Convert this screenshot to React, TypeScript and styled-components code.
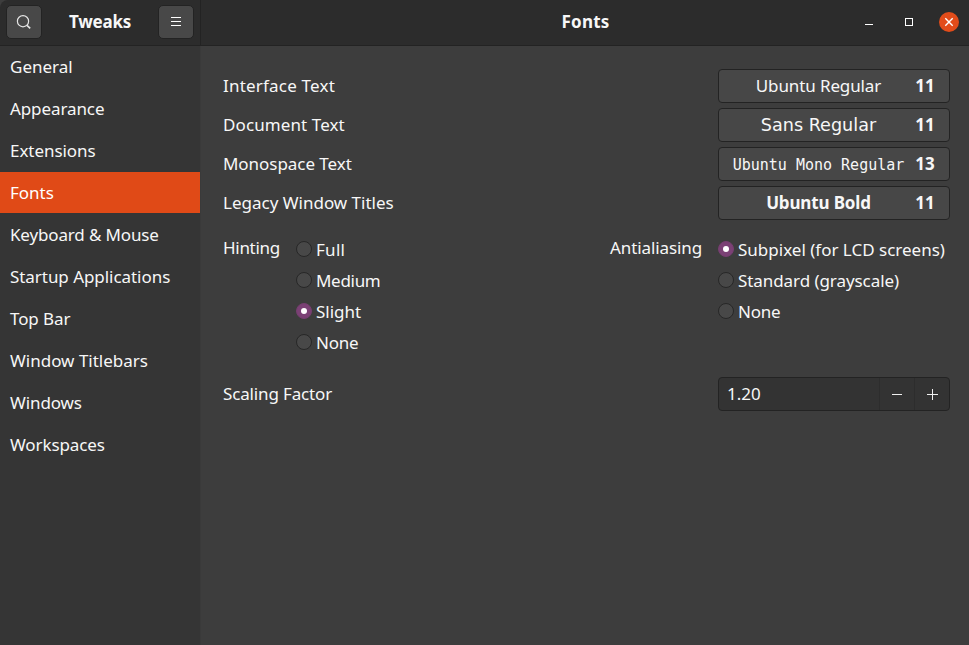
import React from "react";
import styled, { createGlobalStyle, css } from "styled-components";

const GlobalStyle = createGlobalStyle`
  *, *::before, *::after { box-sizing: border-box; }
  body { margin: 0; background: #3d3d3d; overflow: hidden; }
  button { font: inherit; color: inherit; }
`;

const Window = styled.div`
  display: grid;
  grid-template: 46px 1fr / 201px 1fr;
  width: 100vw;
  height: 100vh;
  color: #f7f7f7;
  font: 400 17px/24px "Noto Sans", "Open Sans", sans-serif;
  white-space: nowrap;
  cursor: default;
`;

const Header = styled.header`
  display: flex;
  align-items: center;
  justify-content: space-between;
  background: #2c2c2c;
  border-bottom: 1px solid #232323;
  padding-bottom: 1px;
`;

const SideHeader = styled(Header)`
  padding-left: 6px;
  padding-right: 6px;
  border-right: 1px solid #232323;
  border-top-left-radius: 8px;
`;

const MainHeader = styled(Header)`
  display: grid;
  grid-template-columns: 1fr auto 1fr;
  padding-left: 11px;
  padding-right: 10px;
`;

const Title = styled.h1<{ $tracking?: number }>`
  margin: 0;
  font-size: 17px;
  font-weight: 700;
  line-height: 24px;
  letter-spacing: ${(p) => p.$tracking ?? 0}px;
`;

const HeaderButton = styled.button`
  display: grid;
  place-items: center;
  width: 36px;
  height: 34px;
  padding: 0;
  border: 1px solid #232323;
  border-radius: 5px;
  background: #484848;
`;

const WindowControls = styled.div`
  grid-column: 3;
  display: flex;
  justify-content: flex-end;
  gap: 20px;
`;

const ControlButton = styled.button<{ $close?: boolean }>`
  display: grid;
  place-items: center;
  width: 20px;
  height: 20px;
  padding: 0;
  border: 0;
  border-radius: 50%;
  background: ${(p) => (p.$close ? "#e24c1a" : "transparent")};
`;

const Sidebar = styled.nav`
  display: flex;
  flex-direction: column;
  gap: 1px;
  background: #353535;
  border-right: 1px solid #3a3a3a;
`;

const SidebarItem = styled.a<{ $active?: boolean; $tracking?: number }>`
  height: 41px;
  padding-left: 10px;
  line-height: 41px;
  letter-spacing: ${(p) => p.$tracking ?? 0}px;
  ${(p) => p.$active && css`background: #e04a17; color: #fff;`}
`;

const Content = styled.main`
  display: flex;
  flex-direction: column;
  padding: 23px 19px 0 22px;
  background: #3d3d3d;
`;

const FontRows = styled.section`
  display: flex;
  flex-direction: column;
  gap: 5px;
`;

const SettingRow = styled.div`
  display: flex;
  align-items: center;
  justify-content: space-between;
  height: 34px;
`;

const Label = styled.span<{ $tracking?: number }>`
  letter-spacing: ${(p) => p.$tracking ?? 0}px;
`;

const FontButton = styled.button`
  display: flex;
  align-items: center;
  width: 232px;
  height: 34px;
  padding: 0 14px 0 0;
  border: 1px solid #232323;
  border-radius: 4px;
  background: #474747;
`;

const FontName = styled.span<{ $family?: string; $size?: number; $bold?: boolean; $tracking?: number; $drop?: number }>`
  flex: 1;
  padding-left: 3px;
  padding-top: ${(p) => p.$drop ?? 0}px;
  text-align: center;
  font-family: ${(p) => p.$family ?? "inherit"};
  font-size: ${(p) => p.$size ?? 17}px;
  font-weight: ${(p) => (p.$bold ? 700 : 400)};
  letter-spacing: ${(p) => p.$tracking ?? 0}px;
`;

const FontSize = styled.span`
  width: 20px;
  font-weight: 700;
`;

const Choices = styled.section`
  display: flex;
  justify-content: space-between;
  margin-top: 14px;
`;

const ChoiceGroup = styled.div<{ $width?: number }>`
  display: flex;
  align-items: flex-start;
  gap: 16px;
  ${(p) => p.$width && css`width: ${p.$width}px;`}
`;

const GroupLabel = styled.span<{ $width: number; $tracking?: number }>`
  width: ${(p) => p.$width}px;
  padding-top: 2px;
  letter-spacing: ${(p) => p.$tracking ?? 0}px;
`;

const RadioList = styled.div`
  display: flex;
  flex-direction: column;
  gap: 7px;
  padding-top: 3px;
`;

const Radio = styled.label`
  display: flex;
  align-items: center;
  gap: 4px;
  height: 24px;
`;

const RadioText = styled.span<{ $tracking?: number }>`
  padding-top: 2px;
  letter-spacing: ${(p) => p.$tracking ?? 0}px;
`;

const RadioDot = styled.span<{ $checked?: boolean }>`
  display: grid;
  place-items: center;
  width: 16px;
  height: 16px;
  border: 1px solid ${(p) => (p.$checked ? "#763e70" : "#272727")};
  border-radius: 50%;
  background: ${(p) => (p.$checked ? "#7b4175" : "#484848")};
  &::after {
    content: "";
    width: 6px;
    height: 6px;
    border-radius: 50%;
    background: ${(p) => (p.$checked ? "#fff" : "transparent")};
  }
`;

const ScalingRow = styled(SettingRow)`
  margin-top: 23px;
`;

const SpinBox = styled.div`
  display: grid;
  grid-template-columns: 1fr 35px 35px;
  width: 232px;
  height: 34px;
  border: 1px solid #232323;
  border-radius: 4px;
  background: #333;
`;

const SpinValue = styled.span`
  padding-left: 8px;
  line-height: 32px;
`;

const SpinButton = styled.button`
  display: grid;
  place-items: center;
  padding: 0;
  border: 0;
  border-left: 1px solid #2d2d2d;
  background: transparent;
`;

const SearchIcon = () => (
  <svg width="16" height="16" viewBox="0 0 16 16" fill="none" stroke="#e6e6e6" strokeWidth="1.2">
    <circle cx="7" cy="7.2" r="5.6" />
    <path d="M11 11.3 14.2 14.3" strokeWidth="1.6" />
  </svg>
);

const MenuIcon = () => (
  <svg width="16" height="16" viewBox="0 0 16 16" fill="#fff" shapeRendering="crispEdges">
    <path d="M3 3h10v1H3zM3 7h10v1H3zM3 11h10v1H3z" />
  </svg>
);

const MinimizeIcon = () => (
  <svg width="16" height="16" viewBox="0 0 16 16" shapeRendering="crispEdges">
    <path d="M4 10h8v1H4z" fill="#fff" />
  </svg>
);

const MaximizeIcon = () => (
  <svg width="16" height="16" viewBox="0 0 16 16" shapeRendering="crispEdges">
    <path d="M4.5 4.5h7v7h-7z" fill="none" stroke="#fff" />
  </svg>
);

const CloseIcon = () => (
  <svg width="16" height="16" viewBox="0 0 16 16">
    <path d="m4.3 4.3 7.4 7.4m0-7.4-7.4 7.4" stroke="#fff" strokeWidth="1.4" />
  </svg>
);

const MinusIcon = () => (
  <svg width="16" height="16" viewBox="0 0 16 16" shapeRendering="crispEdges">
    <path d="M3 8h10v1H3z" fill="#f0f0f0" />
  </svg>
);

const PlusIcon = () => (
  <svg width="16" height="16" viewBox="0 0 16 16" shapeRendering="crispEdges">
    <path d="M3 8h11v1H3zM8 3h1v11H8z" fill="#f0f0f0" />
  </svg>
);

const sections = [
  { name: "General" },
  { name: "Appearance", tracking: -0.1 },
  { name: "Extensions", tracking: -0.05 },
  { name: "Fonts" },
  { name: "Keyboard & Mouse", tracking: -0.15 },
  { name: "Startup Applications", tracking: -0.05 },
  { name: "Top Bar", tracking: -0.1 },
  { name: "Window Titlebars" },
  { name: "Windows", tracking: -0.1 },
  { name: "Workspaces", tracking: -0.1 },
];

const fonts = [
  { label: "Interface Text", labelTracking: 0.2, name: "Ubuntu Regular", size: 11, tracking: -0.12 },
  { label: "Document Text", labelTracking: 0.1, name: "Sans Regular", size: 11, family: '"DejaVu Sans", sans-serif', px: 17.6 },
  { label: "Monospace Text", labelTracking: -0.05, name: "Ubuntu Mono Regular", size: 13, family: '"DejaVu Sans Mono", monospace', px: 15, drop: 2 },
  { label: "Legacy Window Titles", name: "Ubuntu Bold", size: 11, bold: true, tracking: -0.15 },
];

const hinting = [
  { name: "Full", tracking: 0.3 },
  { name: "Medium", tracking: -0.3 },
  { name: "Slight", checked: true },
  { name: "None", tracking: -0.2 },
];

const antialiasing = [
  { name: "Subpixel (for LCD screens)", checked: true },
  { name: "Standard (grayscale)", tracking: -0.07 },
  { name: "None", tracking: -0.2 },
];

type Option = { name: string; checked?: boolean; tracking?: number };

const RadioGroup = ({ options }: { options: Option[] }) => (
  <RadioList>
    {options.map((o) => (
      <Radio key={o.name}>
        <RadioDot $checked={o.checked} />
        <RadioText $tracking={o.tracking}>{o.name}</RadioText>
      </Radio>
    ))}
  </RadioList>
);

export default function App() {
  return (
    <>
      <GlobalStyle />
      <Window>
        <SideHeader>
          <HeaderButton aria-label="Search"><SearchIcon /></HeaderButton>
          <Title $tracking={-0.25}>Tweaks</Title>
          <HeaderButton aria-label="Menu"><MenuIcon /></HeaderButton>
        </SideHeader>
        <MainHeader>
          <span />
          <Title $tracking={0.2}>Fonts</Title>
          <WindowControls>
            <ControlButton aria-label="Minimize"><MinimizeIcon /></ControlButton>
            <ControlButton aria-label="Maximize"><MaximizeIcon /></ControlButton>
            <ControlButton aria-label="Close" $close><CloseIcon /></ControlButton>
          </WindowControls>
        </MainHeader>
        <Sidebar>
          {sections.map((s) => (
            <SidebarItem key={s.name} $active={s.name === "Fonts"} $tracking={s.tracking}>
              {s.name}
            </SidebarItem>
          ))}
        </Sidebar>
        <Content>
          <FontRows>
            {fonts.map((f) => (
              <SettingRow key={f.label}>
                <Label $tracking={f.labelTracking}>{f.label}</Label>
                <FontButton>
                  <FontName $family={f.family} $size={f.px} $bold={f.bold} $tracking={f.tracking} $drop={f.drop}>
                    {f.name}
                  </FontName>
                  <FontSize>{f.size}</FontSize>
                </FontButton>
              </SettingRow>
            ))}
          </FontRows>
          <Choices>
            <ChoiceGroup>
              <GroupLabel $width={57} $tracking={-0.3}>Hinting</GroupLabel>
              <RadioGroup options={hinting} />
            </ChoiceGroup>
            <ChoiceGroup $width={340}>
              <GroupLabel $width={92} $tracking={-0.1}>Antialiasing</GroupLabel>
              <RadioGroup options={antialiasing} />
            </ChoiceGroup>
          </Choices>
          <ScalingRow>
            <Label $tracking={-0.15}>Scaling Factor</Label>
            <SpinBox>
              <SpinValue>1.20</SpinValue>
              <SpinButton aria-label="Decrease"><MinusIcon /></SpinButton>
              <SpinButton aria-label="Increase"><PlusIcon /></SpinButton>
            </SpinBox>
          </ScalingRow>
        </Content>
      </Window>
    </>
  );
}
